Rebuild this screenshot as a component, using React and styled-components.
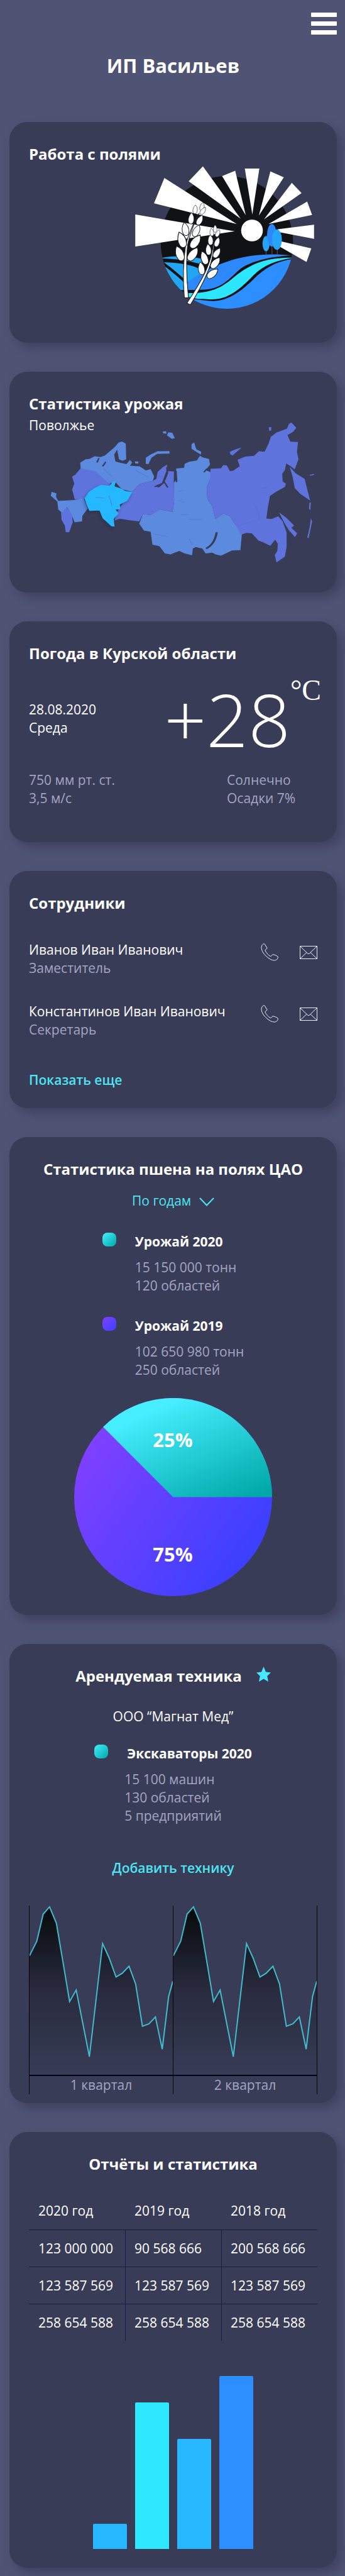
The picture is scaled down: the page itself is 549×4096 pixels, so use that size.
import React from 'react';
import styled, { createGlobalStyle } from 'styled-components';

const color = {
  page: '#4f5474',
  card: '#393c57',
  text: '#ffffff',
  muted: '#a3a6c2',
  accent: '#4ee5f2',
};

const GlobalStyle = createGlobalStyle`
  *, *::before, *::after { box-sizing: border-box; }
  body {
    margin: 0;
    background: ${color.page};
    color: ${color.text};
    font-family: 'Open Sans', 'Noto Sans', sans-serif;
    font-size: 21px;
    line-height: 29px;
  }
  h1, h2, h3, p, ul { margin: 0; padding: 0; }
  button, select {
    border: 0;
    padding: 0;
    background: none;
    color: inherit;
    font: inherit;
    cursor: pointer;
  }
`;

const Page = styled.div`
  padding: 20px 13px 14px 15px;
`;

const Header = styled.header`
  display: flex;
  flex-direction: column;
  gap: 29px;
  margin-bottom: 69px;
`;

const MenuButton = styled.button`
  align-self: flex-end;
  display: flex;
  flex-direction: column;
  justify-content: space-between;
  width: 41px;
  height: 35px;
`;

const MenuBar = styled.span`
  height: 7px;
  border-radius: 1px;
  background: #ffffff;
`;

const Title = styled.h1`
  font-size: 31px;
  line-height: 41px;
  font-weight: 700;
  text-align: center;
`;

const Cards = styled.main`
  display: flex;
  flex-direction: column;
  gap: 46px;
`;

const Card = styled.section`
  display: flex;
  flex-direction: column;
  align-items: ${(p) => (p.$centered ? 'center' : 'stretch')};
  min-height: 351px;
  padding: 34px 31px ${(p) => p.$bottom || 30}px;
  border-radius: 28px;
  background: ${color.card};
  box-shadow: 8px 8px 16px rgba(56, 52, 82, 0.6);
`;

const CardTitle = styled.h2`
  font-size: 24px;
  line-height: 33px;
  font-weight: 700;
`;

const FieldsPicture = styled.svg`
  align-self: flex-end;
  width: 287px;
  height: 228px;
  margin: 3px 4px 0 0;
`;

const Region = styled.p`
  margin-top: 4px;
`;

const MapPicture = styled.svg`
  align-self: flex-end;
  width: 424px;
  height: 229px;
  margin: -21px 2px 0 0;
`;

const WeatherNow = styled.div`
  display: flex;
  align-items: center;
  justify-content: space-between;
  margin-top: 27px;
`;

const Temperature = styled.div`
  display: flex;
  align-items: flex-start;
  margin-right: -6px;
`;

const Degrees = styled.span`
  font-size: 117px;
  line-height: 122px;
  font-weight: 300;
`;

const Unit = styled.span`
  font-family: 'Liberation Serif', serif;
  font-size: 46px;
  line-height: 32px;
`;

const WeatherDetails = styled.div`
  display: grid;
  grid-template-columns: 1fr 144px;
  margin-top: 22px;
  color: ${color.muted};
`;

const Staff = styled.ul`
  display: flex;
  flex-direction: column;
  gap: 40px;
  margin: 44px 0 51px;
  list-style: none;
`;

const Person = styled.li`
  display: flex;
  justify-content: space-between;
  align-items: flex-start;
`;

const Muted = styled.p`
  color: ${color.muted};
`;

const Contacts = styled.div`
  display: flex;
  align-items: center;
  gap: 33px;
  height: 36px;
`;

const IconButton = styled.button`
  display: flex;
  svg { display: block; }
`;

const TextButton = styled.button`
  align-self: ${(p) => (p.$centered ? 'center' : 'flex-start')};
  color: ${color.accent};
  font-weight: 600;
`;

const Picker = styled.label`
  position: relative;
  display: flex;
  margin: 20px 0 36px;
  color: ${color.accent};
`;

const PickerSelect = styled.select`
  appearance: none;
  padding-right: 36px;
  height: 29px;
`;

const PickerArrow = styled.svg`
  position: absolute;
  right: 0;
  top: 9px;
  pointer-events: none;
`;

const Legend = styled.div`
  display: flex;
  flex-direction: column;
  gap: 35px;
`;

const LegendRow = styled.div`
  display: grid;
  grid-template-columns: 22px auto;
  column-gap: 30px;
  row-gap: 12px;
  align-items: start;
`;

const Swatch = styled.span`
  width: 22px;
  height: 22px;
  border-radius: 8px;
  background: ${(p) =>
    p.$tone === 'violet'
      ? 'linear-gradient(135deg, #8040ff, #3c40ff)'
      : 'linear-gradient(135deg, #46eeff, #00a8a8)'};
`;

const LegendName = styled.h3`
  font-size: 21px;
  line-height: 29px;
  font-weight: 700;
`;

const LegendFacts = styled.div`
  grid-column: 2;
  color: ${color.muted};
`;

const Pie = styled.svg`
  width: 315px;
  height: 315px;
  margin-top: 30px;
  text {
    fill: #ffffff;
    font-size: 31px;
    font-weight: 700;
    text-anchor: middle;
  }
`;

const TitleRow = styled.div`
  display: flex;
  align-items: flex-start;
  gap: 23px;
  svg { margin-top: 2px; }
`;

const Company = styled.p`
  margin: 34px 0 30px;
`;

const RentalFacts = styled.div`
  margin: 12px 0 54px;
  color: ${color.muted};
`;

const Quarters = styled.div`
  align-self: stretch;
  display: flex;
  margin-top: 45px;
  border-left: 1px solid #020208;
`;

const Quarter = styled.figure`
  flex: 1;
  margin: 0;
  border-right: 1px solid #020208;
  svg { display: block; width: 100%; height: 269px; }
`;

const QuarterName = styled.figcaption`
  border-top: 2px solid #04051a;
  text-align: center;
  color: ${color.muted};
`;

const Report = styled.table`
  align-self: stretch;
  table-layout: fixed;
  border-collapse: separate;
  border-spacing: 0;
  margin-top: 29px;
  th, td {
    padding: 15px 0 15px 15px;
    text-align: left;
    font-weight: 400;
    white-space: nowrap;
  }
  td {
    padding: 15px 0 14px 15px;
    border-top: 1px solid #1b1e42;
  }
  td + td {
    padding-left: 14px;
    border-left: 1px solid #1b1e42;
  }
`;

const Bars = styled.div`
  display: flex;
  align-items: flex-end;
  gap: 13px;
  margin-top: 56px;
`;

const Bar = styled.div`
  width: 54px;
  border-radius: 2px 2px 0 0;
  background: ${(p) => p.$fill};
`;

function Leaf({ x, y, r, s = 1 }) {
  return (
    <path
      transform={`translate(${x} ${y}) rotate(${r}) scale(${s})`}
      d="M0-48C20-30 27-5 20 22C14 44-10 46-18 26C-27 0-16-28 0-48Z"
    />
  );
}

function Fields() {
  return (
    <FieldsPicture viewBox="28 76 1128 894" role="img" aria-label="Поля">
      <defs>
        <clipPath id="globe">
          <circle cx="606" cy="552" r="415" />
        </clipPath>
      </defs>
      <circle cx="606" cy="552" r="414" fill="#101214" />
      <g clipPath="url(#globe)">
        <path d="M190 652C260 632 380 636 450 655L450 690C380 668 280 655 190 652Z" fill="#22a5f2" />
        <path d="M200 676C290 676 400 690 480 735L500 800L340 800C300 745 260 705 200 676Z" fill="#22a5f2" />
        <path d="M200 680C260 720 300 755 340 795L340 850L300 850Z" fill="#22a5f2" />
        <path d="M345 850L350 810C420 750 520 700 600 675C740 625 880 620 1010 634C880 640 760 668 690 718C600 800 560 850 440 848Z" fill="#2d88fb" />
        <path d="M340 868C480 875 560 850 650 770C760 680 860 645 1025 648C900 665 830 700 770 760C680 855 600 915 500 908C440 908 380 905 340 880Z" fill="#2ce6ff" />
        <path d="M1030 655C920 665 840 715 770 785C680 870 600 925 500 918L380 905L450 985H1030Z" fill="#2d8eff" />
        <path d="M200 678C280 740 320 770 345 800M210 664C320 660 410 690 450 720" fill="none" stroke="#101214" strokeWidth="16" />
      </g>
      <g fill="#ffffff">
        <path d="M33 378L655 483L33 578Z" />
        <path d="M215 150L668 438L150 308Z" />
        <path d="M456 77L692 404L367 170Z" />
        <path d="M658 104L724 382L576 138Z" />
        <path d="M718 91H809L765 378Z" />
        <path d="M878 108L962 146L806 384Z" />
        <path d="M1012 180L1073 244L838 408Z" />
        <path d="M1108 297L1139 381L866 438Z" />
        <path d="M1151 441V530L915 485L925 470Z" />
        <path d="M1134 590L1104 674L930 575L940 545Z" />
        <circle cx="763" cy="478" r="68" />
      </g>
      <path d="M851 600V628M888 570V628M921 590V628" stroke="#6b4038" strokeWidth="5" />
      <ellipse cx="851" cy="560" rx="22" ry="48" fill="#25a4f8" />
      <ellipse cx="887" cy="508" rx="30" ry="70" fill="#2d88fb" />
      <ellipse cx="919" cy="535" rx="31" ry="64" fill="#25a4f8" />
      <g fill="#ffffff" stroke="#16181c" strokeWidth="4">
        <path d="M432 370C400 420 360 520 348 570C335 660 328 760 340 898H366C352 760 350 670 360 570C372 510 405 420 432 370Z" />
        <path d="M526 500C520 600 510 650 470 740C440 800 390 880 356 932L378 942C410 890 455 810 482 745C518 660 528 600 526 500Z" />
        <Leaf x={450} y={330} r={12} s={0.6} />
        <Leaf x={407} y={348} r={5} s={0.62} />
        <Leaf x={455} y={356} r={35} s={0.6} />
        <Leaf x={382} y={405} r={4} s={0.8} />
        <Leaf x={435} y={415} r={28} s={0.76} />
        <Leaf x={346} y={472} r={-10} s={0.95} />
        <Leaf x={414} y={482} r={25} s={0.9} />
        <Leaf x={324} y={540} r={-18} s={1.15} />
        <Leaf x={408} y={550} r={35} s={1.12} />
        <Leaf x={310} y={625} r={-22} s={1.12} />
        <Leaf x={392} y={628} r={35} s={1.12} />
        <Leaf x={532} y={468} r={0} s={0.52} />
        <Leaf x={511} y={490} r={-8} s={0.55} />
        <Leaf x={548} y={497} r={25} s={0.55} />
        <Leaf x={503} y={540} r={-4} s={0.72} />
        <Leaf x={544} y={552} r={18} s={0.7} />
        <Leaf x={490} y={600} r={-6} s={0.78} />
        <Leaf x={542} y={620} r={32} s={0.8} />
        <Leaf x={465} y={652} r={-20} s={0.98} />
        <Leaf x={533} y={682} r={38} s={0.96} />
        <Leaf x={446} y={718} r={-10} s={0.9} />
        <Leaf x={514} y={748} r={50} s={0.95} />
      </g>
    </FieldsPicture>
  );
}

function RussiaMap() {
  return (
    <MapPicture viewBox="231 355 1211 900" preserveAspectRatio="none" role="img" aria-label="Карта России">
      <defs>
        <filter id="lift" x="-20%" y="-20%" width="150%" height="150%">
          <feDropShadow dx="-4" dy="8" stdDeviation="8" floodColor="#1f2138" floodOpacity="0.45" />
        </filter>
      </defs>
      <g fill="#5c8adf">
        <path d="M372 650L370 612L395 592L412 590L435 573L462 578L482 568L505 542L528 514L544 488L560 481L577 495L579 592L562 602L546 592L538 532L524 562L530 606L548 612L580 622L596 596L606 612L596 632L640 636L668 662L690 654L706 700L700 726L640 746L606 795L560 780L530 735L500 745L440 670Z" />
        <path d="M236 820L240 795L262 805L260 828L270 852L345 846L385 832L404 900L380 945L378 980L345 986L330 940L310 890L290 930L270 905L266 856L250 836Z" />
        <path d="M668 620L668 582L690 562L722 542L776 541L776 556L720 558L694 582L680 622Z" />
        <path d="M746 418L760 416L762 432L746 430ZM770 424L788 426L800 460L786 464L764 442Z" />
        <path d="M876 498L888 486L892 506L898 530L920 545L918 562L900 548L876 526Z" />
        <path d="M618 606L634 606L634 618L620 618Z" />
        <path d="M806 650L842 645L845 620L865 608L900 600L914 570L926 580L955 590L960 625L940 660L962 672L962 710L945 770L948 840L970 885L985 965L1020 930L1048 945L1075 1000L1105 1055L1098 1160L1060 1162L1010 1194L985 1186L970 1175L940 1180L925 1150L895 1140L882 1150L878 1192L845 1180L820 1165L780 1186L755 1180L730 1135L698 1125L690 1045L660 1038L638 995L655 935L690 940L730 905L790 920L797 850L795 740L806 720Z" />
      </g>
      <g fill="#5e74dc">
        <path d="M372 648L440 668L500 744L530 760L500 800L400 836L345 842L333 780L343 745L333 700L348 688Z" />
        <path d="M310 893L332 940L336 985L320 1048L304 1048L300 1005L285 970L283 925Z" />
        <path d="M700 726L716 714L722 670L745 642L764 625L766 652L752 700L742 740L710 762L728 768L750 742L764 700L770 665L796 668L795 740L797 850L790 920L730 905L690 940L655 935L638 980L590 972L550 963L525 975L545 900L606 795L640 746Z" />
        <path d="M962 652L1010 648L1020 628L1036 630L1050 665L1065 664L1095 635L1085 595L1120 575L1160 570L1182 542L1208 545L1226 495L1236 452L1262 425L1310 400L1318 372L1330 362L1352 395L1338 420L1312 440L1325 482L1360 484L1355 545L1362 592L1345 655L1326 635L1306 618L1300 660L1288 682L1290 730L1305 745L1300 765L1260 795L1232 822L1222 900L1216 962L1240 965L1270 948L1290 980L1308 1050L1308 1140L1300 1200L1282 1218L1262 1236L1254 1190L1266 1165L1268 1120L1256 1095L1234 1132L1200 1110L1180 1100L1150 1055L1125 1052L1102 1062L1075 1000L1048 945L1020 930L985 965L970 885L948 840L945 770L962 710Z" />
        <path d="M1322 640L1350 680L1390 715L1400 770L1415 850L1370 808L1345 772L1335 700Z" />
        <path d="M1274 924L1305 955L1342 1005L1330 1020L1356 1055L1346 1078L1318 1035L1296 985Z" />
        <path d="M1050 545L1080 528L1104 518L1078 550L1062 568L1052 560Z" />
        <path d="M1227 392L1238 390L1238 412L1229 414Z" />
        <path d="M1412 862L1418 862L1416 910L1410 900ZM1418 960L1424 980L1408 1085L1402 1080L1414 1010ZM1412 690L1432 682L1432 690L1416 694Z" />
      </g>
      <path
        d="M390 836L410 795L440 768L465 752L505 758L518 732L532 730L525 762L550 772L575 790L606 796L584 850L550 875L552 905L530 905L544 930L522 965L526 1012L512 1010L472 960L458 912L412 914L400 880Z"
        fill="#25b8ff"
        filter="url(#lift)"
      />
      <g fill="none" stroke="#393c57" strokeWidth="7">
        <path d="M764 640L766 680L744 742L708 764M750 730L768 768" />
        <path d="M805 664L808 734" />
        <path d="M990 1048C985 1095 970 1130 942 1150" strokeWidth="10" />
        <path d="M455 585L446 612M486 608L472 636M932 672L948 650" />
      </g>
      <g fill="none" stroke="#4b71c0" strokeWidth="3" opacity="0.7">
        <path d="M815 792L846 788M822 850L845 864M828 940L860 936M866 966L922 968M700 1058L765 1074M865 1090L880 1128M475 650L515 702M622 660L680 706M440 830L480 835M500 820L515 880" />
        <path d="M1100 1000L1165 978M1168 880L1186 970M1195 775L1220 768" />
      </g>
    </MapPicture>
  );
}

function PhoneIcon() {
  return (
    <svg width="29" height="28" viewBox="0 0 114 112" fill="none" stroke="#eceeff" strokeWidth="4" strokeLinejoin="round">
      <path d="M3 30C2 16 10 4 19 3C24 3 26 7 28 12L39 30C41 35 28 37 27 43C27 52 48 78 60 82C68 84 70 71 76 71C84 71 103 80 107 84C111 90 105 100 98 105C88 111 70 108 55 98C32 84 6 58 3 30Z" />
    </svg>
  );
}

function MailIcon() {
  return (
    <svg width="28" height="21" viewBox="0 0 28 21" fill="none" stroke="#eceeff">
      <path d="M0.5 0.5H27.5V20.5H0.5Z" />
      <path d="M0.5 0.5L12 11.5C13.5 13 14.500 13 16 11.5L27.5 0.5M0.5 20.5L11 10.500M27.5 20.5L17 10.500" />
    </svg>
  );
}

function QuarterChart({ name }) {
  const id = `fill-${name[0]}`;
  const line =
    'M133 415L166 325L195 155L224 110L255 212L285 455L315 702L345 630L405 1046L465 339L495 430L526 548L554 525L585 481L615 592L646 856L676 840L705 798L736 999L765 670L784 575';
  return (
    <Quarter>
      <svg viewBox="133 102 651 1057" preserveAspectRatio="none" aria-hidden="true">
        <defs>
          <linearGradient id={id} x1="0" y1="0" x2="0" y2="1">
            <stop offset="0" stopColor="#06090a" />
            <stop offset="0.1" stopColor="#0e1115" />
            <stop offset="0.3" stopColor="#1b1e2b" />
            <stop offset="0.5" stopColor="#292b3e" />
            <stop offset="0.8" stopColor="#31354b" />
            <stop offset="1" stopColor="#393c57" />
          </linearGradient>
        </defs>
        <path d={`${line}V1159H133Z`} fill={`url(#${id})`} />
        <path d={line} fill="none" stroke="#42bccb" strokeWidth="2" vectorEffect="non-scaling-stroke" />
      </svg>
      <QuarterName>{name}</QuarterName>
    </Quarter>
  );
}

const staff = [
  { name: 'Иванов Иван Иванович', role: 'Заместитель' },
  { name: 'Константинов Иван Иванович', role: 'Секретарь' },
];

const harvest = [
  { name: 'Урожай 2020', tone: 'cyan', facts: ['15 150 000 тонн', '120 областей'] },
  { name: 'Урожай 2019', tone: 'violet', facts: ['102 650 980 тонн', '250 областей'] },
];

const years = ['2020 год', '2019 год', '2018 год'];
const report = [
  ['123 000 000', '90 568 666', '200 568 666'],
  ['123 587 569', '123 587 569', '123 587 569'],
  ['258 654 588', '258 654 588', '258 654 588'],
];

const bars = [
  { height: 40, fill: '#26b7ff' },
  { height: 233, fill: '#2de8ff' },
  { height: 175, fill: '#26b7ff' },
  { height: 275, fill: '#2d8eff' },
];

export default function App() {
  return (
    <Page>
      <GlobalStyle />
      <Header>
        <MenuButton type="button" aria-label="Меню">
          <MenuBar />
          <MenuBar />
          <MenuBar />
        </MenuButton>
        <Title>ИП Васильев</Title>
      </Header>

      <Cards>
        <Card>
          <CardTitle>Работа с полями</CardTitle>
          <Fields />
        </Card>

        <Card>
          <CardTitle>Статистика урожая</CardTitle>
          <Region>Поволжье</Region>
          <RussiaMap />
        </Card>

        <Card>
          <CardTitle>Погода в Курской области</CardTitle>
          <WeatherNow>
            <div>
              <p>28.08.2020</p>
              <p>Среда</p>
            </div>
            <Temperature>
              <Degrees>+28</Degrees>
              <Unit>°C</Unit>
            </Temperature>
          </WeatherNow>
          <WeatherDetails>
            <p>750 мм рт. ст.</p>
            <p>Солнечно</p>
            <p>3,5 м/с</p>
            <p>Осадки 7%</p>
          </WeatherDetails>
        </Card>

        <Card>
          <CardTitle>Сотрудники</CardTitle>
          <Staff>
            {staff.map((person) => (
              <Person key={person.name}>
                <div>
                  <p>{person.name}</p>
                  <Muted>{person.role}</Muted>
                </div>
                <Contacts>
                  <IconButton type="button" aria-label="Позвонить">
                    <PhoneIcon />
                  </IconButton>
                  <IconButton type="button" aria-label="Написать">
                    <MailIcon />
                  </IconButton>
                </Contacts>
              </Person>
            ))}
          </Staff>
          <TextButton type="button">Показать еще</TextButton>
        </Card>

        <Card $centered>
          <CardTitle>Статистика пшена на полях ЦАО</CardTitle>
          <Picker>
            <PickerSelect aria-label="Период" defaultValue="years">
              <option value="years">По годам</option>
            </PickerSelect>
            <PickerArrow width="24" height="14" viewBox="0 0 24 14" fill="none" stroke="currentColor" strokeWidth="2">
              <path d="M1 1L12 12.500L23 1" />
            </PickerArrow>
          </Picker>
          <Legend>
            {harvest.map((item) => (
              <LegendRow key={item.name}>
                <Swatch $tone={item.tone} />
                <LegendName>{item.name}</LegendName>
                <LegendFacts>
                  {item.facts.map((fact) => (
                    <p key={fact}>{fact}</p>
                  ))}
                </LegendFacts>
              </LegendRow>
            ))}
          </Legend>
          <Pie viewBox="0 0 315 315" role="img" aria-label="Доли урожая">
            <defs>
              <linearGradient id="pie-violet" x1="0.05" y1="0.25" x2="0.85" y2="0.85">
                <stop offset="0" stopColor="#8040ff" />
                <stop offset="1" stopColor="#3c40ff" />
              </linearGradient>
              <linearGradient id="pie-cyan" x1="0.25" y1="0.15" x2="0.9" y2="1">
                <stop offset="0" stopColor="#46eeff" />
                <stop offset="1" stopColor="#00a8a8" />
              </linearGradient>
            </defs>
            <circle cx="157.5" cy="157.5" r="157.5" fill="url(#pie-violet)" />
            <path d="M157.5 157.5L46.1 46.1A157.5 157.5 0 0 1 315 157.5Z" fill="url(#pie-cyan)" />
            <text x="157" y="78">25%</text>
            <text x="157" y="260">75%</text>
          </Pie>
        </Card>

        <Card $centered $bottom={14}>
          <TitleRow>
            <CardTitle>Арендуемая техника</CardTitle>
            <svg width="23" height="24" viewBox="0 0 23 24" fill="#46e8ff" aria-hidden="true">
              <path d="M11.500 0L15 8.500L23 9.500L17.200 15L19 24L11.500 19.500L4 24L5.800 15L0 9.500L8 8.500Z" />
            </svg>
          </TitleRow>
          <Company>ООО “Магнат Мед”</Company>
          <LegendRow>
            <Swatch />
            <LegendName>Экскаваторы 2020</LegendName>
          </LegendRow>
          <RentalFacts>
            <p>15 100 машин</p>
            <p>130 областей</p>
            <p>5 предприятий</p>
          </RentalFacts>
          <TextButton type="button" $centered>
            Добавить технику
          </TextButton>
          <Quarters>
            <QuarterChart name="1 квартал" />
            <QuarterChart name="2 квартал" />
          </Quarters>
        </Card>

        <Card $centered>
          <CardTitle>Отчёты и статистика</CardTitle>
          <Report>
            <thead>
              <tr>
                {years.map((year) => (
                  <th key={year} scope="col">{year}</th>
                ))}
              </tr>
            </thead>
            <tbody>
              {report.map((row) => (
                <tr key={row[0]}>
                  {row.map((value, i) => (
                    <td key={i}>{value}</td>
                  ))}
                </tr>
              ))}
            </tbody>
          </Report>
          <Bars>
            {bars.map((bar, i) => (
              <Bar key={i} $fill={bar.fill} style={{ height: bar.height }} />
            ))}
          </Bars>
        </Card>
      </Cards>
    </Page>
  );
}
